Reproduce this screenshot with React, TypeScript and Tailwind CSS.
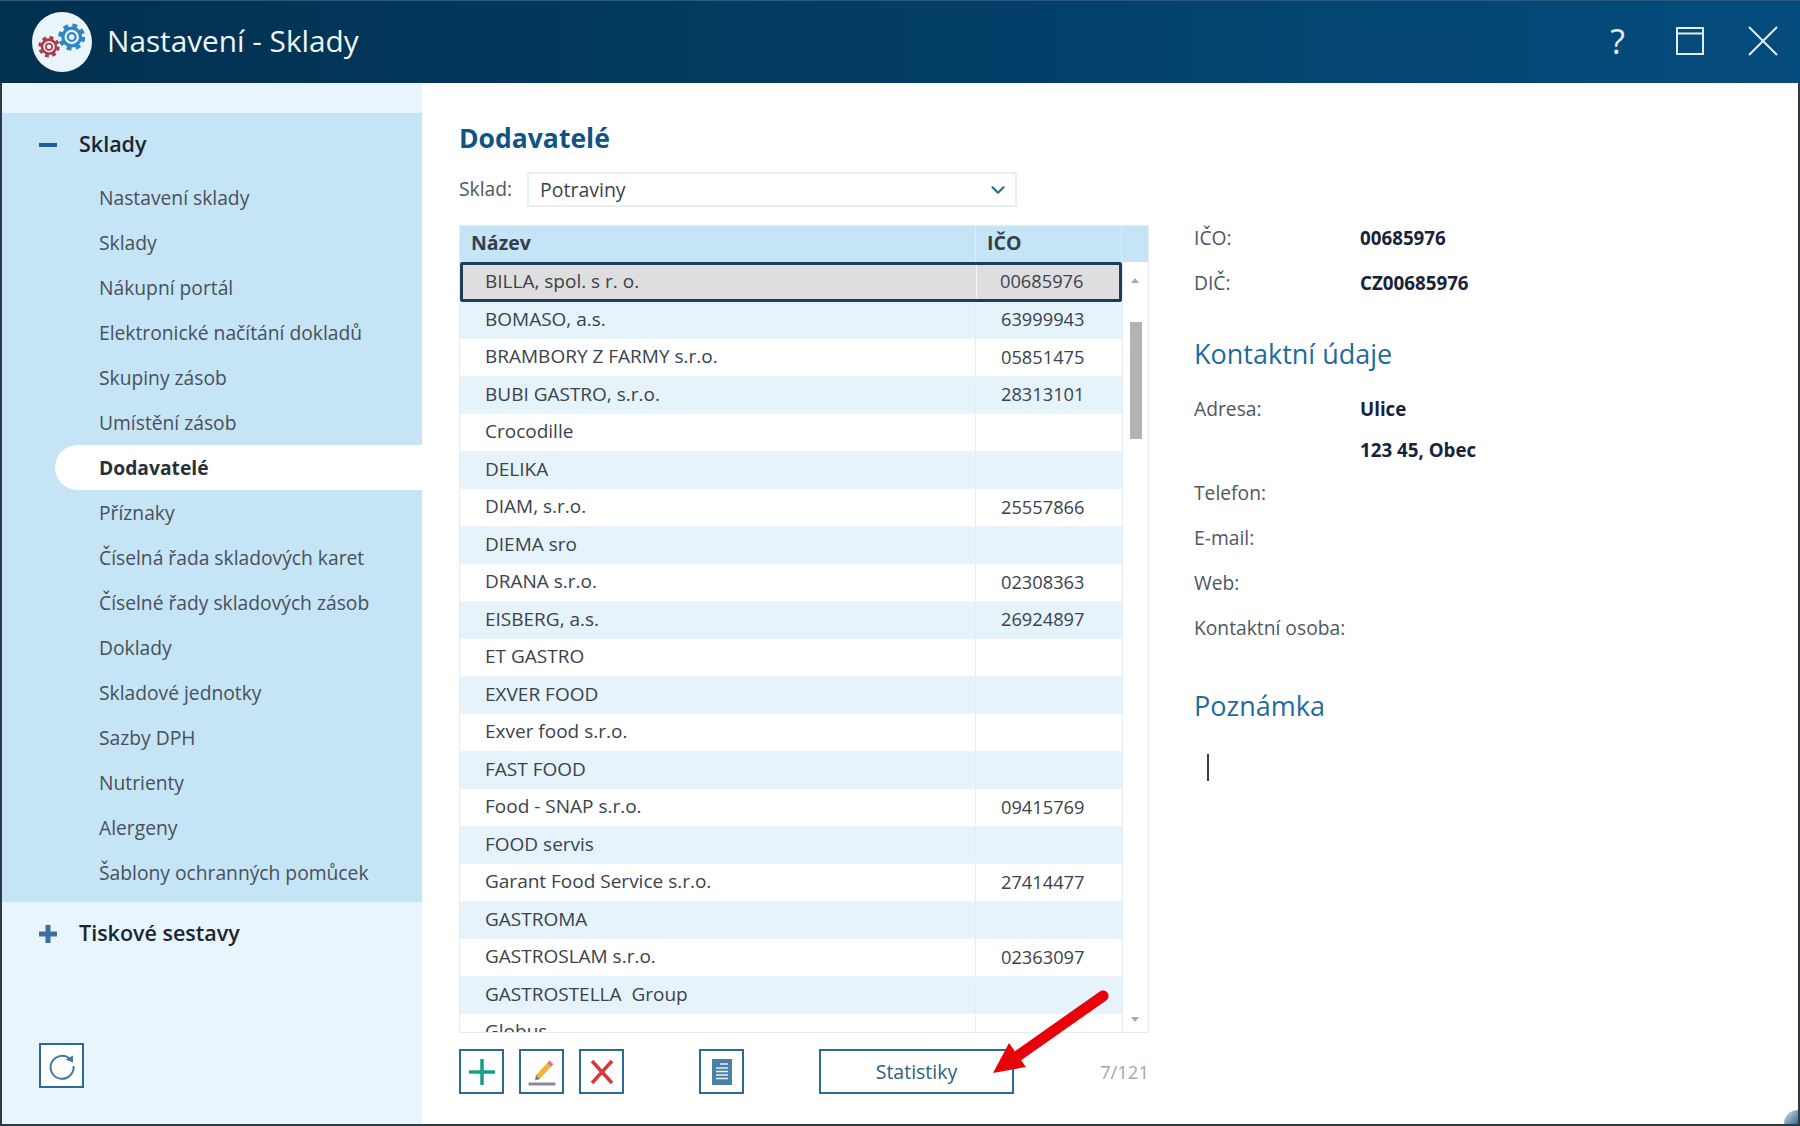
import React from "react";
import { ChevronDown } from "lucide-react";

const menuItems = [
  "Nastavení sklady",
  "Sklady",
  "Nákupní portál",
  "Elektronické načítání dokladů",
  "Skupiny zásob",
  "Umístění zásob",
  "Dodavatelé",
  "Příznaky",
  "Číselná řada skladových karet",
  "Číselné řady skladových zásob",
  "Doklady",
  "Skladové jednotky",
  "Sazby DPH",
  "Nutrienty",
  "Alergeny",
  "Šablony ochranných pomůcek",
];

const suppliers = [
  ["BILLA, spol. s r. o.", "00685976"],
  ["BOMASO, a.s.", "63999943"],
  ["BRAMBORY Z FARMY s.r.o.", "05851475"],
  ["BUBI GASTRO, s.r.o.", "28313101"],
  ["Crocodille", ""],
  ["DELIKA", ""],
  ["DIAM, s.r.o.", "25557866"],
  ["DIEMA sro", ""],
  ["DRANA s.r.o.", "02308363"],
  ["EISBERG, a.s.", "26924897"],
  ["ET GASTRO", ""],
  ["EXVER FOOD", ""],
  ["Exver food s.r.o.", ""],
  ["FAST FOOD", ""],
  ["Food - SNAP s.r.o.", "09415769"],
  ["FOOD servis", ""],
  ["Garant Food Service s.r.o.", "27414477"],
  ["GASTROMA", ""],
  ["GASTROSLAM s.r.o.", "02363097"],
  ["GASTROSTELLA  Group", ""],
  ["Globus", ""],
];

const Gear = ({ cx, cy, r, color }: { cx: number; cy: number; r: number; color: string }) => (
  <g fill="none" stroke={color}>
    <circle cx={cx} cy={cy} r={r} strokeWidth={r * 0.5} strokeDasharray={`${r * 0.42} ${r * 0.37}`} />
    <circle cx={cx} cy={cy} r={r * 0.82} strokeWidth={r * 0.3} />
    <circle cx={cx} cy={cy} r={r * 0.36} strokeWidth={r * 0.2} />
  </g>
);

const Logo = () => (
  <div className="w-[60px] h-[60px] rounded-full bg-[#eaf4fb]">
    <svg width="60" height="60" viewBox="0 0 60 60">
      <Gear cx={17} cy={34.7} r={8.6} color="#ad3d49" />
      <Gear cx={39.7} cy={25} r={10.8} color="#2f86c5" />
    </svg>
  </div>
);

const ToolButton = ({ children }: { children: React.ReactNode }) => (
  <button className="w-[45px] h-[45px] flex items-center justify-center border-2 border-[#2b6a96] bg-white">
    {children}
  </button>
);

const Sidebar = () => (
  <div className="w-[420px] h-full bg-[#e8f5fc] flex flex-col shrink-0">
    <div className="h-[30px] shrink-0" />
    <div className="h-[789px] bg-[#c5e4f5] flex flex-col shrink-0">
      {/* sklady heading */}
      <div className="h-[62px] pt-[1px] flex items-center pl-[37px] shrink-0">
        <div className="w-[18px] h-[4px] bg-[#1f5f94]" />
        <span className="ml-[22px] text-[21.5px] font-semibold text-[#1c2630]">Sklady</span>
      </div>
      {menuItems.map((item) =>
        item === "Dodavatelé" ? (
          <div
            key={item}
            className="h-[45px] ml-[53px] pl-[44px] pt-[2px] flex items-center bg-white rounded-l-full text-[19.25px] font-bold text-[#27313b] shrink-0"
          >
            {item}
          </div>
        ) : (
          <div
            key={item}
            className="h-[45px] ml-[53px] pl-[44px] pt-[2px] flex items-center text-[19.25px] text-[#4a5059] shrink-0"
          >
            {item}
          </div>
        )
      )}
    </div>
    <div className="h-[62px] pt-[1px] flex items-center pl-[37px] shrink-0">
      <svg width="18" height="18" viewBox="0 0 18 18">
        <path d="M9 0v18M0 9h18" stroke="#3a6f9f" strokeWidth="5" />
      </svg>
      <span className="ml-[22px] text-[21.5px] font-semibold text-[#1c2630]">Tiskové sestavy</span>
    </div>
    <button className="ml-[37px] mt-[79px] w-[45px] h-[45px] flex items-center justify-center border-2 border-[#2b6a96] bg-white">
      <svg width="28" height="28" viewBox="0 0 28 28" fill="none">
        <path d="M22.5 7.5A11.5 11.5 0 1 0 25.5 14" stroke="#3f7ba3" strokeWidth="2" />
        <path d="M17.5 7.5 L25 3.5 L25 10.5 Z" fill="#3f7ba3" />
      </svg>
    </button>
  </div>
);

const SupplierTable = () => (
  <div className="h-[808px] border border-[#e2edf6] flex flex-col">
    {/* table head */}
    <div className="h-[36px] bg-[#c5e4f5] flex shrink-0 text-[19.5px] font-bold text-[#33404c]">
      <div className="w-[516px] pl-[11px] pb-[2px] flex items-center border-r border-[#e2edf6]">Název</div>
      <div className="w-[146px] pl-[11px] pb-[2px] flex items-center border-r border-[#e2edf6]">IČO</div>
      <div className="flex-1" />
    </div>
    <div className="flex-1 flex min-h-0">
      <div className="w-[662px] overflow-hidden">
        {suppliers.map(([name, ico], i) =>
          i === 0 ? (
            <div
              key={name}
              className="h-[39.5px] flex items-center bg-[#dedede] border-[3px] border-[#1f3d5a] rounded-[2px] text-[19px] text-[#3b424b]"
            >
              <div className="w-[514px] h-full pl-[22px] pb-[2px] flex items-center border-r border-[#f3f6f9]">{name}</div>
              <div className="flex-1 pl-[23px] pb-[2px] text-[18.25px]">{ico}</div>
            </div>
          ) : (
            <div
              key={name}
              className={`h-[37.5px] flex items-center text-[19px] text-[#3b424b] border-b border-[#edf4f9] ${
                i % 2 === 1 ? "bg-[#e6f3fb]" : "bg-white"
              }`}
            >
              <div className="w-[516px] h-full pl-[25px] pb-[2px] flex items-center border-r border-[#e2edf6] whitespace-pre">{name}</div>
              <div className="flex-1 pl-[25px] pb-[2px] text-[18.25px]">{ico}</div>
            </div>
          )
        )}
      </div>
      {/* scrollbar */}
      <div className="flex-1 border-l border-[#e2edf6] relative">
        <div className="absolute top-[16px] left-[8px] w-0 h-0 border-x-[4px] border-x-transparent border-b-[5px] border-b-[#a9a9a9]" />
        <div className="absolute top-[60px] left-[7px] w-[12px] h-[117px] bg-[#b4b4b4]" />
        <div className="absolute bottom-[10px] left-[8px] w-0 h-0 border-x-[4px] border-x-transparent border-t-[5px] border-t-[#a9a9a9]" />
      </div>
    </div>
  </div>
);

const InfoRow = ({ label, value, h }: { label: string; value?: string; h: string }) => (
  <div className={`${h} flex items-center`}>
    <div className="w-[166px] text-[19.25px] text-[#4f5760]">{label}</div>
    {value && <div className="text-[18.75px] font-bold text-[#17233a]">{value}</div>}
  </div>
);

const App = () => (
  <div
    className="relative w-[1800px] h-[1126px] flex flex-col bg-[#2f3a42] overflow-hidden"
    style={{ fontFamily: '"Open Sans", "Noto Sans", sans-serif' }}
  >
    {/* title bar */}
    <div className="h-[83px] shrink-0 flex items-center bg-gradient-to-r from-[#02304f] to-[#044c7d] border-t border-[#2a5a7d] pl-[32px]">
      <Logo />
      <span className="ml-[15px] mb-[1px] text-[29.75px] text-[#eef6fb]">Nastavení - Sklady</span>
      <div className="ml-auto mb-[2px] flex items-center">
        <span className="text-[34px] leading-none text-[#e4edf3] mr-[51px]">?</span>
        <svg width="28" height="28" viewBox="0 0 28 28" fill="none" stroke="#e4edf3" strokeWidth="2" className="mr-[44px]">
          <rect x="1" y="1" width="26" height="26" />
          <path d="M1 6.5h26" />
        </svg>
        <svg width="30" height="30" viewBox="0 0 30 30" fill="none" stroke="#e4edf3" strokeWidth="2" className="mr-[22px]">
          <path d="M1 1 29 29M29 1 1 29" />
        </svg>
      </div>
    </div>

    <div className="flex-1 min-h-0 flex ml-[2px] mr-[2px] mb-[2px] bg-white">
      <Sidebar />
      {/* content */}
      <div className="flex-1 flex pl-[37px]">
        <div className="w-[690px] flex flex-col pt-[38px]">
          <div className="h-[36px] flex items-center text-[26.5px] font-bold text-[#0f5486]">Dodavatelé</div>
          <div className="mt-[15px] h-[35px] flex items-center">
            <span className="w-[68px] text-[19.25px] text-[#4f5760]">Sklad:</span>
            <div className="w-[490px] h-full border-2 border-[#e8eff6] flex items-center justify-between pl-[11px] pr-[6px] text-[19.5px] text-[#3b424b]">
              Potraviny
              <ChevronDown size={22} strokeWidth={2.5} className="text-[#2f6f9f]" />
            </div>
          </div>
          <div className="mt-[18px]">
            <SupplierTable />
          </div>
          {/* bottom toolbar */}
          <div className="mt-[16px] h-[45px] flex items-center">
            <ToolButton>
              <svg width="26" height="26" viewBox="0 0 26 26">
                <path d="M13 1v24M1 13h24" stroke="#12a08a" strokeWidth="3.5" strokeLinecap="round" />
              </svg>
            </ToolButton>
            <div className="ml-[15px]">
              <ToolButton>
                <svg width="30" height="32" viewBox="0 0 30 32">
                  <path d="M11 21 22 9" stroke="#f3b13c" strokeWidth="5.5" />
                  <path d="M22 9 24.5 6.3" stroke="#e0707a" strokeWidth="5.5" />
                  <path d="M8 24.5 9 19 13 23z" fill="#8a7a5a" />
                  <path d="M1.5 28h27" stroke="#8f8796" strokeWidth="3" />
                </svg>
              </ToolButton>
            </div>
            <div className="ml-[15px]">
              <ToolButton>
                <svg width="24" height="26" viewBox="0 0 24 26">
                  <path d="M2 2 22 24M22 2 2 24" stroke="#d8393f" strokeWidth="3.5" />
                </svg>
              </ToolButton>
            </div>
            <div className="ml-[75px]">
              <ToolButton>
                <svg width="20" height="26" viewBox="0 0 20 26">
                  <rect width="20" height="26" fill="#4c7fa6" />
                  <path d="M8 5h8M4 9h12M4 12.5h12M4 16h12M4 19.5h12" stroke="#e6f0f6" strokeWidth="1.4" />
                </svg>
              </ToolButton>
            </div>
            <button className="ml-[75px] w-[195px] h-[45px] border-2 border-[#2b6a96] bg-white text-[19.5px] text-[#2f5f80]">
              Statistiky
            </button>
            <span className="ml-auto text-[18.5px] text-[#a3a8ad]">7/121</span>
          </div>
        </div>

        {/* detail column */}
        <div className="ml-[45px] flex-1 flex flex-col pt-[132.5px]">
          <InfoRow label="IČO:" value="00685976" h="h-[45px]" />
          <InfoRow label="DIČ:" value="CZ00685976" h="h-[45px]" />
          <div className="mt-[23.5px] h-[50px] flex items-center text-[27px] text-[#1f6a9f]">Kontaktní údaje</div>
          <div className="mt-[9.5px]">
            <InfoRow label="Adresa:" value="Ulice" h="h-[41px]" />
            <InfoRow label="" value="123 45, Obec" h="h-[41px]" />
          </div>
          <InfoRow label="Telefon:" h="h-[45px]" />
          <InfoRow label="E-mail:" h="h-[45px]" />
          <InfoRow label="Web:" h="h-[45px]" />
          <InfoRow label="Kontaktní osoba:" h="h-[45px]" />
          <div className="mt-[30.5px] h-[50px] flex items-center text-[27px] text-[#1f6a9f]">Poznámka</div>
          <div className="mt-[23px] ml-[13px] w-[2px] h-[27px] bg-[#3a3f45]" />
        </div>
      </div>
    </div>

    {/* red arrow over the Statistiky button */}
    <svg width="130" height="100" viewBox="0 0 130 100" className="absolute left-[985px] top-[985px]">
      <path d="M118 11 34 70" stroke="#e8000b" strokeWidth="11" strokeLinecap="round" />
      <path d="M8 88 24 58 41 82z" fill="#e8000b" />
    </svg>

    {/* corner blob */}
    <div className="absolute right-[2px] bottom-[2px] w-[14px] h-[14px] rounded-tl-full bg-gradient-to-br from-[#dbe8f1] to-[#2f6d9a]" />
  </div>
);

export default App;
